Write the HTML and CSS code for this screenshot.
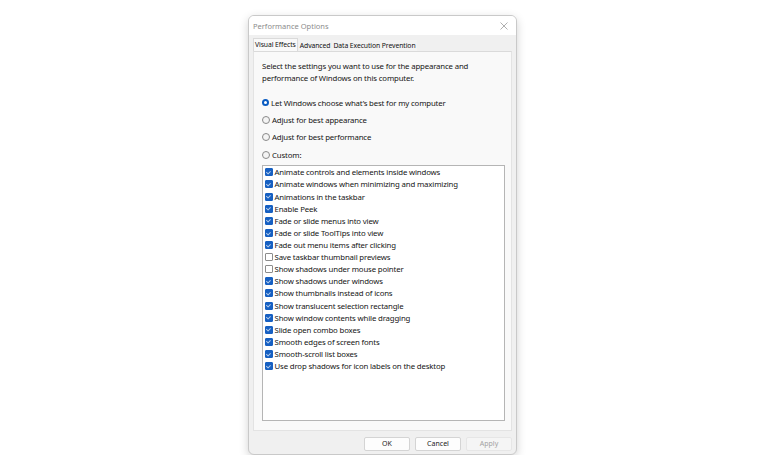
FILE: index.html
```html
<!DOCTYPE html>
<html lang="en">
<head>
<meta charset="utf-8">
<title>Performance Options</title>
<link rel="stylesheet" href="styles.css">
</head>
<body>
<div class="stage">
  <div class="dialog">
    <div class="titlebar">
      <span class="title">Performance Options</span>
      <svg class="close" width="8" height="8" viewBox="0 0 8 8"><path d="M0.5 0.5L7.5 7.5M7.5 0.5L0.5 7.5" stroke="#9a9a9a" stroke-width="0.8" fill="none"/></svg>
    </div>
    <div class="body">
      <div class="tabs">
        <div class="tab active">Visual Effects</div>
        <div class="tab">Advanced</div>
        <div class="tab">Data Execution Prevention</div>
      </div>
      <div class="panel">
        <p class="desc">Select the settings you want to use for the appearance and<br>performance of Windows on this computer.</p>
        <div class="radios">
          <div class="radio-row"><span class="radio on"></span><span>Let Windows choose what’s best for my computer</span></div>
          <div class="radio-row"><span class="radio"></span><span>Adjust for best appearance</span></div>
          <div class="radio-row"><span class="radio"></span><span>Adjust for best performance</span></div>
          <div class="radio-row"><span class="radio"></span><span>Custom:</span></div>
        </div>
        <div class="list">
          <div class="item"><span class="cb on"></span><span>Animate controls and elements inside windows</span></div>
          <div class="item"><span class="cb on"></span><span>Animate windows when minimizing and maximizing</span></div>
          <div class="item"><span class="cb on"></span><span>Animations in the taskbar</span></div>
          <div class="item"><span class="cb on"></span><span>Enable Peek</span></div>
          <div class="item"><span class="cb on"></span><span>Fade or slide menus into view</span></div>
          <div class="item"><span class="cb on"></span><span>Fade or slide ToolTips into view</span></div>
          <div class="item"><span class="cb on"></span><span>Fade out menu items after clicking</span></div>
          <div class="item"><span class="cb"></span><span>Save taskbar thumbnail previews</span></div>
          <div class="item"><span class="cb"></span><span>Show shadows under mouse pointer</span></div>
          <div class="item"><span class="cb on"></span><span>Show shadows under windows</span></div>
          <div class="item"><span class="cb on"></span><span>Show thumbnails instead of icons</span></div>
          <div class="item"><span class="cb on"></span><span>Show translucent selection rectangle</span></div>
          <div class="item"><span class="cb on"></span><span>Show window contents while dragging</span></div>
          <div class="item"><span class="cb on"></span><span>Slide open combo boxes</span></div>
          <div class="item"><span class="cb on"></span><span>Smooth edges of screen fonts</span></div>
          <div class="item"><span class="cb on"></span><span>Smooth-scroll list boxes</span></div>
          <div class="item"><span class="cb on"></span><span>Use drop shadows for icon labels on the desktop</span></div>
        </div>
      </div>
      <div class="buttons">
        <div class="btn">OK</div>
        <div class="btn">Cancel</div>
        <div class="btn disabled">Apply</div>
      </div>
    </div>
  </div>
</div>
</body>
</html>
```
FILE: styles.css
```css
html, body {
  margin: 0;
  padding: 0;
  background: #ffffff;
}
body {
  font-family: "Noto Sans", "Open Sans", sans-serif;
  color: #1a1a1a;
}
.stage {
  padding: 15px 0 0 248px;
}
.dialog {
  width: 267px;
  height: 438px;
  border: 1px solid #c9c9c9;
  border-radius: 6px;
  background: #f0f0f0;
  box-shadow: 0 3px 10px rgba(0, 0, 0, 0.18);
  overflow: hidden;
  display: flex;
  flex-direction: column;
}
.titlebar {
  height: 19px;
  background: #ffffff;
  display: flex;
  align-items: center;
  justify-content: space-between;
  padding: 0 8px 0 4px;
}
.title {
  font-size: 7.5px;
  color: #8c8c8c;
}
.close {
  display: block;
}
.body {
  flex: 1;
  display: flex;
  flex-direction: column;
  padding: 0 4px 3px 4px;
}
.tabs {
  display: flex;
  margin-top: 4px;
  height: 12px;
  align-items: flex-end;
}
.tab {
  font-size: 6.8px;
  letter-spacing: -0.08px;
  line-height: 11px;
  padding: 0 1px;
  margin-right: 1px;
  background: #f3f3f3;
  color: #111;
}
.tab.active {
  line-height: 12px;
  padding: 0 1px;
  background: #f9f9f9;
  border: 1px solid #dadada;
  border-bottom: none;
}
.panel {
  height: 380px;
  background: #f9f9f9;
  border: 1px solid #e3e3e3;
  border-top-color: #dadada;
  box-sizing: border-box;
  padding: 8px 0 0 8px;
  font-size: 7.8px;
  letter-spacing: -0.15px;
  color: #151515;
}
.desc {
  margin: 0;
  line-height: 12px;
}
.radios {
  margin-top: 10px;
}
.radio-row {
  height: 17.33px;
  display: flex;
  align-items: center;
}
.radio {
  width: 6px;
  height: 6px;
  border: 1px solid #8a8a8a;
  border-radius: 50%;
  background: #f4f4f4;
  margin: 0 2px 0 0;
  flex: none;
}
.radio.on {
  width: 3px;
  height: 3px;
  border: 2.5px solid #0a5cc2;
  background: #ffffff;
}
.list {
  margin-top: 2px;
  width: 243px;
  height: 256px;
  box-sizing: border-box;
  border: 1px solid #b5b5b5;
  background: #ffffff;
}
.item {
  height: 12.12px;
  display: flex;
  align-items: center;
  padding-left: 1.5px;
}
.cb {
  width: 6px;
  height: 6px;
  border: 1px solid #8c8c8c;
  border-radius: 1px;
  background: #ffffff;
  margin-right: 2px;
  flex: none;
  position: relative;
}
.cb.on {
  background: #1760c2;
  border-color: #1760c2;
}
.cb.on::after {
  content: "";
  position: absolute;
  left: 1.6px;
  top: 0.6px;
  width: 1.6px;
  height: 3px;
  border: solid rgba(255, 255, 255, 0.7);
  border-width: 0 0.7px 0.7px 0;
  transform: rotate(45deg);
}
.buttons {
  display: flex;
  justify-content: flex-end;
  gap: 5px;
  margin-top: 6px;
}
.btn {
  width: 44px;
  height: 12px;
  border: 1px solid #d4d4d4;
  border-radius: 2px;
  background: #fdfdfd;
  font-size: 7px;
  line-height: 12px;
  text-align: center;
  color: #1a1a1a;
}
.btn.disabled {
  background: #f5f5f5;
  border-color: #e6e6e6;
  color: #a2a2a2;
}
```
